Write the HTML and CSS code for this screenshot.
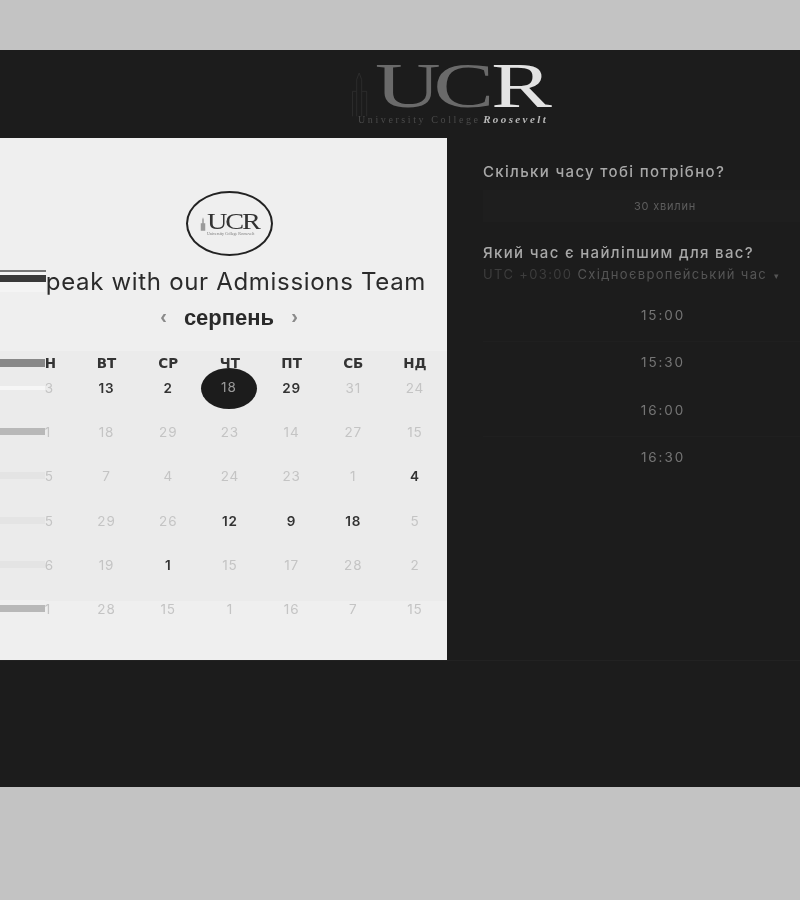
FILE: index.html
```html
<!DOCTYPE html>
<html lang="uk">
<head>
<meta charset="utf-8">
<title>UCR</title>
<link rel="stylesheet" href="styles.css">
</head>
<body>
<div class="frame">
  <header class="top">
    <div class="brand">
      <svg class="tower" viewBox="0 0 24 60" aria-hidden="true"><path d="M3 58V28h5V14l3-8 3 8v14h6v30M8 28v30M14 28v30" fill="none" stroke="#2f2f2f" stroke-width="1"/></svg>
      <div class="brand-text">
        <div class="ucr"><span class="u">U</span><span class="c">C</span><span class="r">R</span></div>
        <div class="sub"><span class="college">University College</span> <span class="roosevelt">Roosevelt</span></div>
      </div>
    </div>
  </header>
  <main class="main">
    <section class="card">
      <div class="badge">
        <svg class="mini-tower" viewBox="0 0 8 18" aria-hidden="true"><path d="M1 18V8h2V3l1-3 1 3v5h2v10z" fill="#9a9a9a"/></svg>
        <div class="badge-text"><div class="badge-ucr">UCR</div><div class="badge-sub">University College Roosevelt</div></div>
      </div>
      <h1 class="title"><span class="title-bars"><i class="b1"></i><i class="b2"></i></span>Speak with our Admissions Team</h1>
      <div class="month"><span class="arrow">‹</span><span class="month-name">серпень</span><span class="arrow">›</span></div>
      <div class="weekdays">
        <div class="cell masked"><i class="bar bar-head"></i>ПН</div><div class="cell">ВТ</div><div class="cell">СР</div><div class="cell">ЧТ</div><div class="cell">ПТ</div><div class="cell">СБ</div><div class="cell">НД</div>
      </div>
      <div class="days">
        <div class="day masked"><i class="bar bar-a"></i>23</div><div class="day on">13</div><div class="day on">2</div><div class="day selected"><span class="pick">18</span></div><div class="day on">29</div><div class="day">31</div><div class="day">24</div>
        <div class="day masked"><i class="bar bar-b"></i>11</div><div class="day">18</div><div class="day">29</div><div class="day">23</div><div class="day">14</div><div class="day">27</div><div class="day">15</div>
        <div class="day masked"><i class="bar bar-c"></i>25</div><div class="day">7</div><div class="day">4</div><div class="day">24</div><div class="day">23</div><div class="day">1</div><div class="day on">4</div>
        <div class="day masked"><i class="bar bar-c"></i>25</div><div class="day">29</div><div class="day">26</div><div class="day on">12</div><div class="day on">9</div><div class="day on">18</div><div class="day">5</div>
        <div class="day masked"><i class="bar bar-c"></i>26</div><div class="day">19</div><div class="day on">1</div><div class="day">15</div><div class="day">17</div><div class="day">28</div><div class="day">2</div>
        <div class="day masked"><i class="bar bar-d"></i>11</div><div class="day">28</div><div class="day">15</div><div class="day">1</div><div class="day">16</div><div class="day">7</div><div class="day">15</div>
      </div>
    </section>
    <aside class="side">
      <h2 class="q q1">Скільки часу тобі потрібно?</h2>
      <div class="duration">30 хвилин</div>
      <h2 class="q q2">Який час є найліпшим для вас?</h2>
      <div class="zone"><span class="utc">UTC +03:00</span> Східноєвропейський час <span class="caret">▾</span></div>
      <ul class="times">
        <li>15:00</li>
        <li>15:30</li>
        <li>16:00</li>
        <li>16:30</li>
      </ul>
    </aside>
  </main>
</div>
</body>
</html>
```
FILE: styles.css
```css
* { box-sizing: border-box; }
html, body { margin: 0; height: 100%; }
body {
  background: #c3c3c3;
  padding-top: 50px;
  overflow: hidden;
  font-family: Inter, "Noto Sans", sans-serif;
}
.frame {
  height: 737px;
  background: #1c1c1c;
  filter: blur(0.6px);
  overflow: hidden;
}
.top {
  height: 88px;
  display: flex;
  justify-content: center;
  padding-left: 100px;
}
.brand {
  width: 200px;
  display: flex;
  align-items: flex-start;
  padding-top: 6px;
}
.tower { width: 20px; height: 62px; flex: none; margin-top: 6px; }
.brand-text { margin-left: 5px; }
.ucr {
  font-family: "Liberation Serif", serif;
  font-size: 64px;
  line-height: 60px;
  height: 60px;
  letter-spacing: -5px;
  white-space: nowrap;
  transform: scaleX(1.42);
  transform-origin: left top;
}
.u, .c { color: #6a6a6a; }
.r { color: #e3e3e3; margin-left: 3px; }
.sub {
  font-family: "Liberation Serif", serif;
  font-size: 10px;
  line-height: 14px;
  margin: -4px 0 0 -17px;
  white-space: nowrap;
}
.college { color: #4a4a4a; letter-spacing: 2.6px; }
.roosevelt { color: #b9b9b9; font-size: 11px; font-weight: bold; font-style: italic; letter-spacing: 2.4px; }

.main {
  height: 523px;
  display: flex;
  border-bottom: 1px solid #222;
}
.card {
  width: 447px;
  flex: none;
  background: #efefef;
  display: flex;
  flex-direction: column;
  align-items: center;
  padding-top: 53px;
}
.badge {
  width: 87px;
  height: 65px;
  flex: none;
  margin-left: 11px;
  border: 2.5px solid #222;
  border-radius: 50%;
  display: flex;
  align-items: center;
  justify-content: center;
  gap: 1px;
}
.mini-tower { width: 6px; height: 16px; }
.badge-text { width: 51px; }
.badge-ucr {
  font-family: "Liberation Serif", serif;
  font-size: 24px;
  line-height: 19px;
  letter-spacing: -1.8px;
  color: #333;
  transform: scaleX(1.18);
  transform-origin: left center;
}
.badge-sub {
  font-family: "Liberation Serif", serif;
  font-size: 4px;
  line-height: 5px;
  color: #777;
  white-space: nowrap;
}
.title {
  position: relative;
  align-self: stretch;
  margin: 11px 0 0;
  height: 30px;
  padding-right: 21px;
  text-align: right;
  font-family: Inter, sans-serif;
  font-size: 24px;
  line-height: 30px;
  font-weight: 400;
  letter-spacing: 0.68px;
  color: #2b2b2b;
  white-space: nowrap;
  overflow: hidden;
}
.title-bars { position: absolute; left: 0; top: 3px; width: 46px; height: 22px; background: #f4f4f4; }
.title-bars i { position: absolute; left: 0; right: 0; display: block; }
.title-bars .b1 { top: 0; height: 2px; background: #777; }
.title-bars .b2 { top: 5px; height: 7px; background: #3a3a3a; }
.month {
  display: flex;
  justify-content: center;
  align-items: center;
  gap: 17px;
  height: 28px;
  margin-top: 7px;
  padding-left: 11px;
}
.month-name {
  font-family: "Liberation Sans", sans-serif;
  font-weight: bold;
  font-size: 22px;
  color: #2a2a2a;
}
.arrow { font-family: "Liberation Sans", sans-serif; font-weight: bold; font-size: 20px; line-height: 20px; color: #8a8a8a; margin-top: -4px; }
.weekdays, .days {
  align-self: stretch;
  display: grid;
  grid-template-columns: repeat(7, 61.7px);
  padding-left: 14px;
}
.weekdays {
  margin-top: 19px;
  padding-top: 4px;
  height: 20px;
  background: #ebebeb;
}
.cell {
  position: relative;
  text-align: center;
  font-family: "DejaVu Sans", sans-serif;
  font-size: 13.5px;
  line-height: 16px;
  font-weight: bold;
  color: #333;
}
.days {
  padding-top: 5px;
  grid-auto-rows: 44.2px;
  background: linear-gradient(#ebebeb 0 85%, #efefef 85%);
}
.day {
  position: relative;
  display: flex;
  align-items: center;
  justify-content: center;
  height: 24px;
  font-size: 13.5px;
  letter-spacing: 0.9px;
  font-family: Inter, sans-serif;
  color: #c4c4c4;
}
.day.on { color: #333; font-weight: 600; }
.pick {
  width: 56px;
  height: 41px;
  flex: none;
  margin-right: 2px;
  border-radius: 50%;
  background: #1c1c1c;
  color: #9a9a9a;
  display: flex;
  align-items: center;
  justify-content: center;
  padding-bottom: 3px;
  position: relative;
}
.masked .bar {
  position: absolute;
  right: 31px;
  width: 60px;
  height: 18px;
  display: block;
}
.bar-head { top: -1px; background: #888; border-top: 5px solid #ebebeb; border-bottom: 5px solid #ebebeb; }
.bar-a { top: 3px; background: #f6f6f6; border-top: 7px solid #ebebeb; border-bottom: 7px solid #ebebeb; }
.bar-b { top: 3px; background: #b8b8b8; border-top: 5px solid #ebebeb; border-bottom: 6px solid #ebebeb; }
.bar-c { top: 3px; background: #e4e4e4; border-top: 5px solid #ebebeb; border-bottom: 6px solid #ebebeb; }
.bar-d { top: 3px; background: #b8b8b8; border-top: 5px solid #efefef; border-bottom: 6px solid #efefef; }

.side {
  flex: 1;
  min-width: 0;
  padding: 0 0 0 36px;
  color: #aaa;
}
.q {
  margin: 0;
  font-family: Inter, sans-serif;
  font-weight: 500;
  font-size: 15px;
  line-height: 20px;
  letter-spacing: 1.33px;
  color: #a8a8a8;
  white-space: nowrap;
}
.q1 { margin-top: 24px; }
.duration {
  width: 364px;
  height: 32px;
  margin-top: 8px;
  background: #1e1e1e;
  text-align: center;
  font-size: 11px;
  line-height: 32px;
  letter-spacing: 0.8px;
  color: #5e5e5e;
}
.q2 { margin-top: 21px; }
.zone {
  font-size: 13px;
  line-height: 16px;
  margin-top: 3px;
  letter-spacing: 1.36px;
  color: #555;
  white-space: nowrap;
}
.utc { color: #3d3d3d; }
.caret { font-size: 9px; margin-left: 2px; }
.times {
  list-style: none;
  width: 360px;
  margin: 11px 0 0;
  padding: 0;
}
.times li {
  height: 47.4px;
  line-height: 41px;
  text-align: center;
  font-size: 13.5px;
  letter-spacing: 1.9px;
  color: #757575;
}
.times li:nth-child(odd) { border-bottom: 1px solid #1f1f1f; }
```
